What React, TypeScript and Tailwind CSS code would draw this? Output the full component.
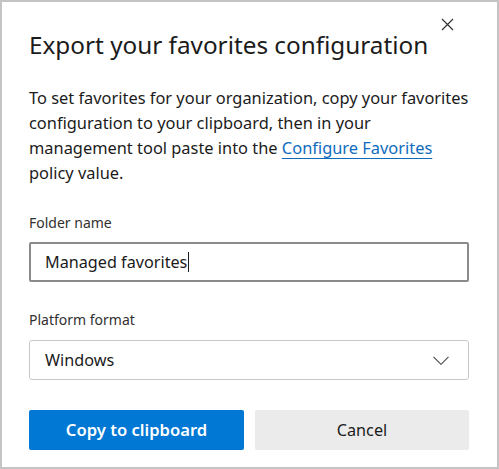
const ChevronDown = () => (
  <svg aria-hidden="true" width="16" height="9" viewBox="0 0 16 9" fill="none" stroke="#4a4a4a" strokeWidth="1.1">
    <path d="M0.5 0.8l7.5 7.5 7.5-7.5" />
  </svg>
);

const CloseIcon = () => (
  <svg aria-hidden="true" width="13" height="13" viewBox="0 0 13 13" fill="none" stroke="#333" strokeWidth="1.2">
    <path d="M1 1l11 11M12 1L1 12" />
  </svg>
);

const App = () => {
  return (
    <div className="h-[469px] w-[499px] bg-white font-['Noto_Sans','Open_Sans',sans-serif] text-[#1b1b1b]">
      <div className="box-border flex h-full w-full flex-col border-2 border-[#c4c4c4] pl-[27px] pr-[28px]">
        <div className="flex justify-end pt-[15px] pr-[15px]">
          <button className="flex h-[14px] w-[14px] items-center justify-center" aria-label="Close">
            <CloseIcon />
          </button>
        </div>
        <h1 className="-mt-[2px] text-[24.3px] leading-[32px]">
          Export your favorites configuration
        </h1>
        <p className="mt-[24px] text-[16.4px] leading-[25px]">
          To set favorites for your organization, copy your favorites
          <br />
          configuration to your clipboard, then in your
          <br />
          management tool paste into the{" "}
          <a className="text-[#0f6cbd] underline decoration-[#0f6cbd] underline-offset-[4px]" href="#">
            Configure Favorites
          </a>
          <br />
          policy value.
        </p>
        <label className="mt-[28px] block text-[14px] leading-[20px] text-[#323130]">Folder name</label>
        <div className="mt-[9px] box-border flex h-[40px] items-center rounded-[2px] border-2 border-[#8a8a8a] px-[14px]">
          <span className="text-[16.2px] text-[#1b1b1b]">Managed favorites</span>
          <span className="ml-[1px] h-[20px] w-[1px] bg-[#1b1b1b]" />
        </div>
        <label className="mt-[28px] block text-[14px] leading-[20px] text-[#323130]">Platform format</label>
        <div className="mt-[10px] box-border flex h-[40px] items-center justify-between rounded-[3px] border border-[#c8c8c8] pl-[15px] pr-[19px]">
          <span className="text-[16.2px] text-[#1b1b1b]">Windows</span>
          <ChevronDown />
        </div>
        <div className="mt-[30px] flex gap-[11px]">
          <button className="h-[40px] w-[215px] rounded-[2px] bg-[#0078d4] text-[16.6px] font-semibold text-white">
            Copy to clipboard
          </button>
          <button className="h-[40px] flex-1 rounded-[2px] bg-[#ebebeb] text-[16.2px] text-[#1b1b1b]">
            Cancel
          </button>
        </div>
      </div>
    </div>
  );
};

export default App;
